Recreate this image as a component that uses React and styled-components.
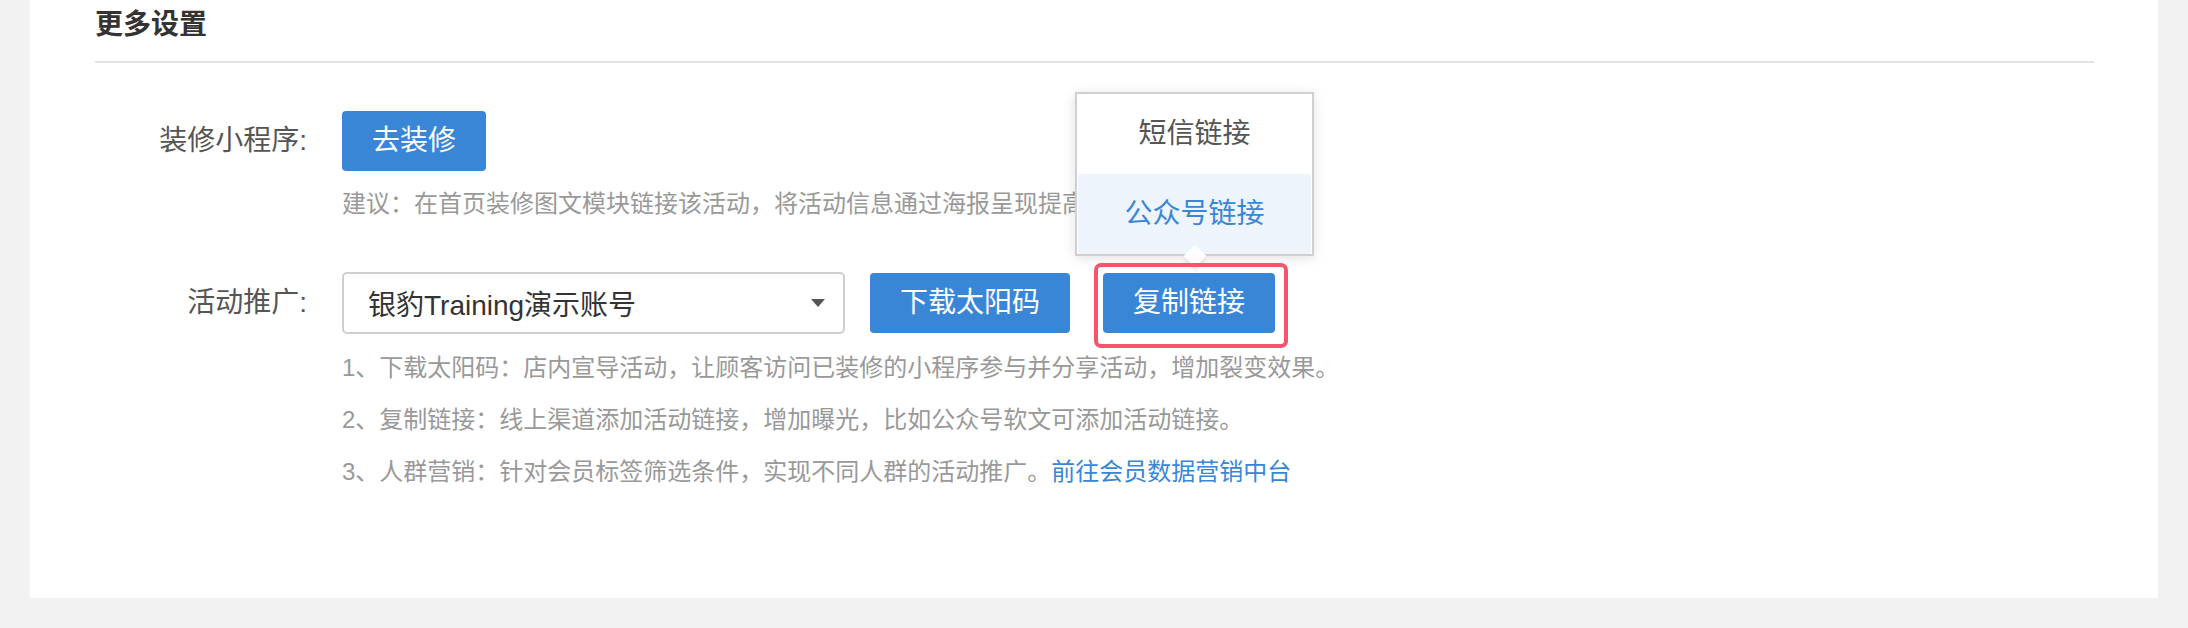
import React from "react";
import styled, { createGlobalStyle } from "styled-components";

const GlobalStyle = createGlobalStyle`
  html, body {
    margin: 0;
    padding: 0;
    background: #f2f2f2;
  }
  body {
    font-family: "Liberation Sans", "Noto Sans CJK SC", sans-serif;
  }
`;

const Page = styled.div`
  padding: 0 30px 30px 30px;
`;

const Panel = styled.div`
  background: #fff;
  min-height: 598px;
  box-sizing: border-box;
  padding: 0 64px 0 65px;
`;

const Header = styled.div`
  font-size: 28px;
  font-weight: bold;
  color: #333;
  line-height: 49px;
  padding-bottom: 12px;
  border-bottom: 2px solid #e4e4e4;
`;

const FormRow = styled.div`
  display: grid;
  grid-template-columns: 212px 1fr;
  column-gap: 35px;
  margin-top: ${(p) => p.top}px;
`;

const Label = styled.div`
  text-align: right;
  font-size: 28px;
  color: #555;
  line-height: ${(p) => p.h}px;
`;

const Content = styled.div`
  display: flex;
  flex-direction: column;
  align-items: flex-start;
`;

const Controls = styled.div`
  display: flex;
  align-items: center;
`;

const Button = styled.button`
  height: 60px;
  padding: 0 30px;
  border: none;
  border-radius: 4px;
  background: #3a86d6;
  color: #fff;
  font-family: inherit;
  font-size: 28px;
  line-height: 60px;
  cursor: pointer;
  margin-left: ${(p) => p.gap || 0}px;
`;

const Hint = styled.div`
  margin-top: ${(p) => p.top}px;
  font-size: 24px;
  line-height: ${(p) => p.lh}px;
  color: #999;
`;

const Link = styled.a`
  color: #3a86d6;
  text-decoration: none;
`;

const Select = styled.div`
  width: 503px;
  height: 62px;
  box-sizing: border-box;
  border: 2px solid #cfcfcf;
  border-radius: 5px;
  padding: 0 18px 0 24px;
  display: flex;
  align-items: center;
  justify-content: space-between;
  font-size: 28px;
  color: #333;
`;

const Caret = styled.span`
  width: 0;
  height: 0;
  border-left: 7px solid transparent;
  border-right: 7px solid transparent;
  border-top: 8px solid #555;
`;

const Highlight = styled.div`
  position: relative;
  align-self: flex-start;
  margin: -9px 0 -14px 24px;
  padding: 10px 13px 15px 9px;
  &::after {
    content: "";
    position: absolute;
    inset: 0;
    border: 4px solid #f4556a;
    border-radius: 7px;
    pointer-events: none;
    z-index: 3;
  }
`;

const Popup = styled.div`
  position: absolute;
  left: -19px;
  bottom: calc(100% + 7px);
  width: 239px;
  box-sizing: border-box;
  background: #fff;
  border: 2px solid #d0d0d0;
  box-shadow: 0 2px 12px rgba(0, 0, 0, 0.12);
  z-index: 2;
  &::after {
    content: "";
    position: absolute;
    left: 50%;
    bottom: -10px;
    width: 16px;
    height: 16px;
    margin-left: -8px;
    background: #fff;
    transform: rotate(45deg);
    box-shadow: 3px 3px 4px rgba(0, 0, 0, 0.08);
  }
`;

const MenuItem = styled.div`
  height: 80px;
  line-height: 80px;
  text-align: center;
  font-size: 28px;
  color: ${(p) => (p.active ? "#3a86d6" : "#555")};
  background: ${(p) => (p.active ? "#edf4fc" : "#fff")};
  border-radius: ${(p) => (p.active ? "3px" : "0")};
  margin: ${(p) => (p.active ? "0 1px" : "0")};
`;

const tips = [
  "1、下载太阳码：店内宣导活动，让顾客访问已装修的小程序参与并分享活动，增加裂变效果。",
  "2、复制链接：线上渠道添加活动链接，增加曝光，比如公众号软文可添加活动链接。",
];

export default function App() {
  return (
    <>
      <GlobalStyle />
      <Page>
        <Panel>
          <Header>更多设置</Header>

          <FormRow top={48}>
            <Label h={60}>装修小程序:</Label>
            <Content>
              <Button>去装修</Button>
              <Hint top={15} lh={36}>
                建议：在首页装修图文模块链接该活动，将活动信息通过海报呈现提高曝光
              </Hint>
            </Content>
          </FormRow>

          <FormRow top={50}>
            <Label h={62}>活动推广:</Label>
            <Content>
              <Controls>
                <Select>
                  <span>银豹Training演示账号</span>
                  <Caret />
                </Select>
                <Button gap={25}>下载太阳码</Button>
                <Highlight>
                  <Popup>
                    <MenuItem>短信链接</MenuItem>
                    <MenuItem active>公众号链接</MenuItem>
                  </Popup>
                  <Button>复制链接</Button>
                </Highlight>
              </Controls>
              <Hint top={8} lh={52}>
                {tips.map((t) => (
                  <div key={t}>{t}</div>
                ))}
                <div>
                  3、人群营销：针对会员标签筛选条件，实现不同人群的活动推广。
                  <Link href="#">前往会员数据营销中台</Link>
                </div>
              </Hint>
            </Content>
          </FormRow>
        </Panel>
      </Page>
    </>
  );
}
